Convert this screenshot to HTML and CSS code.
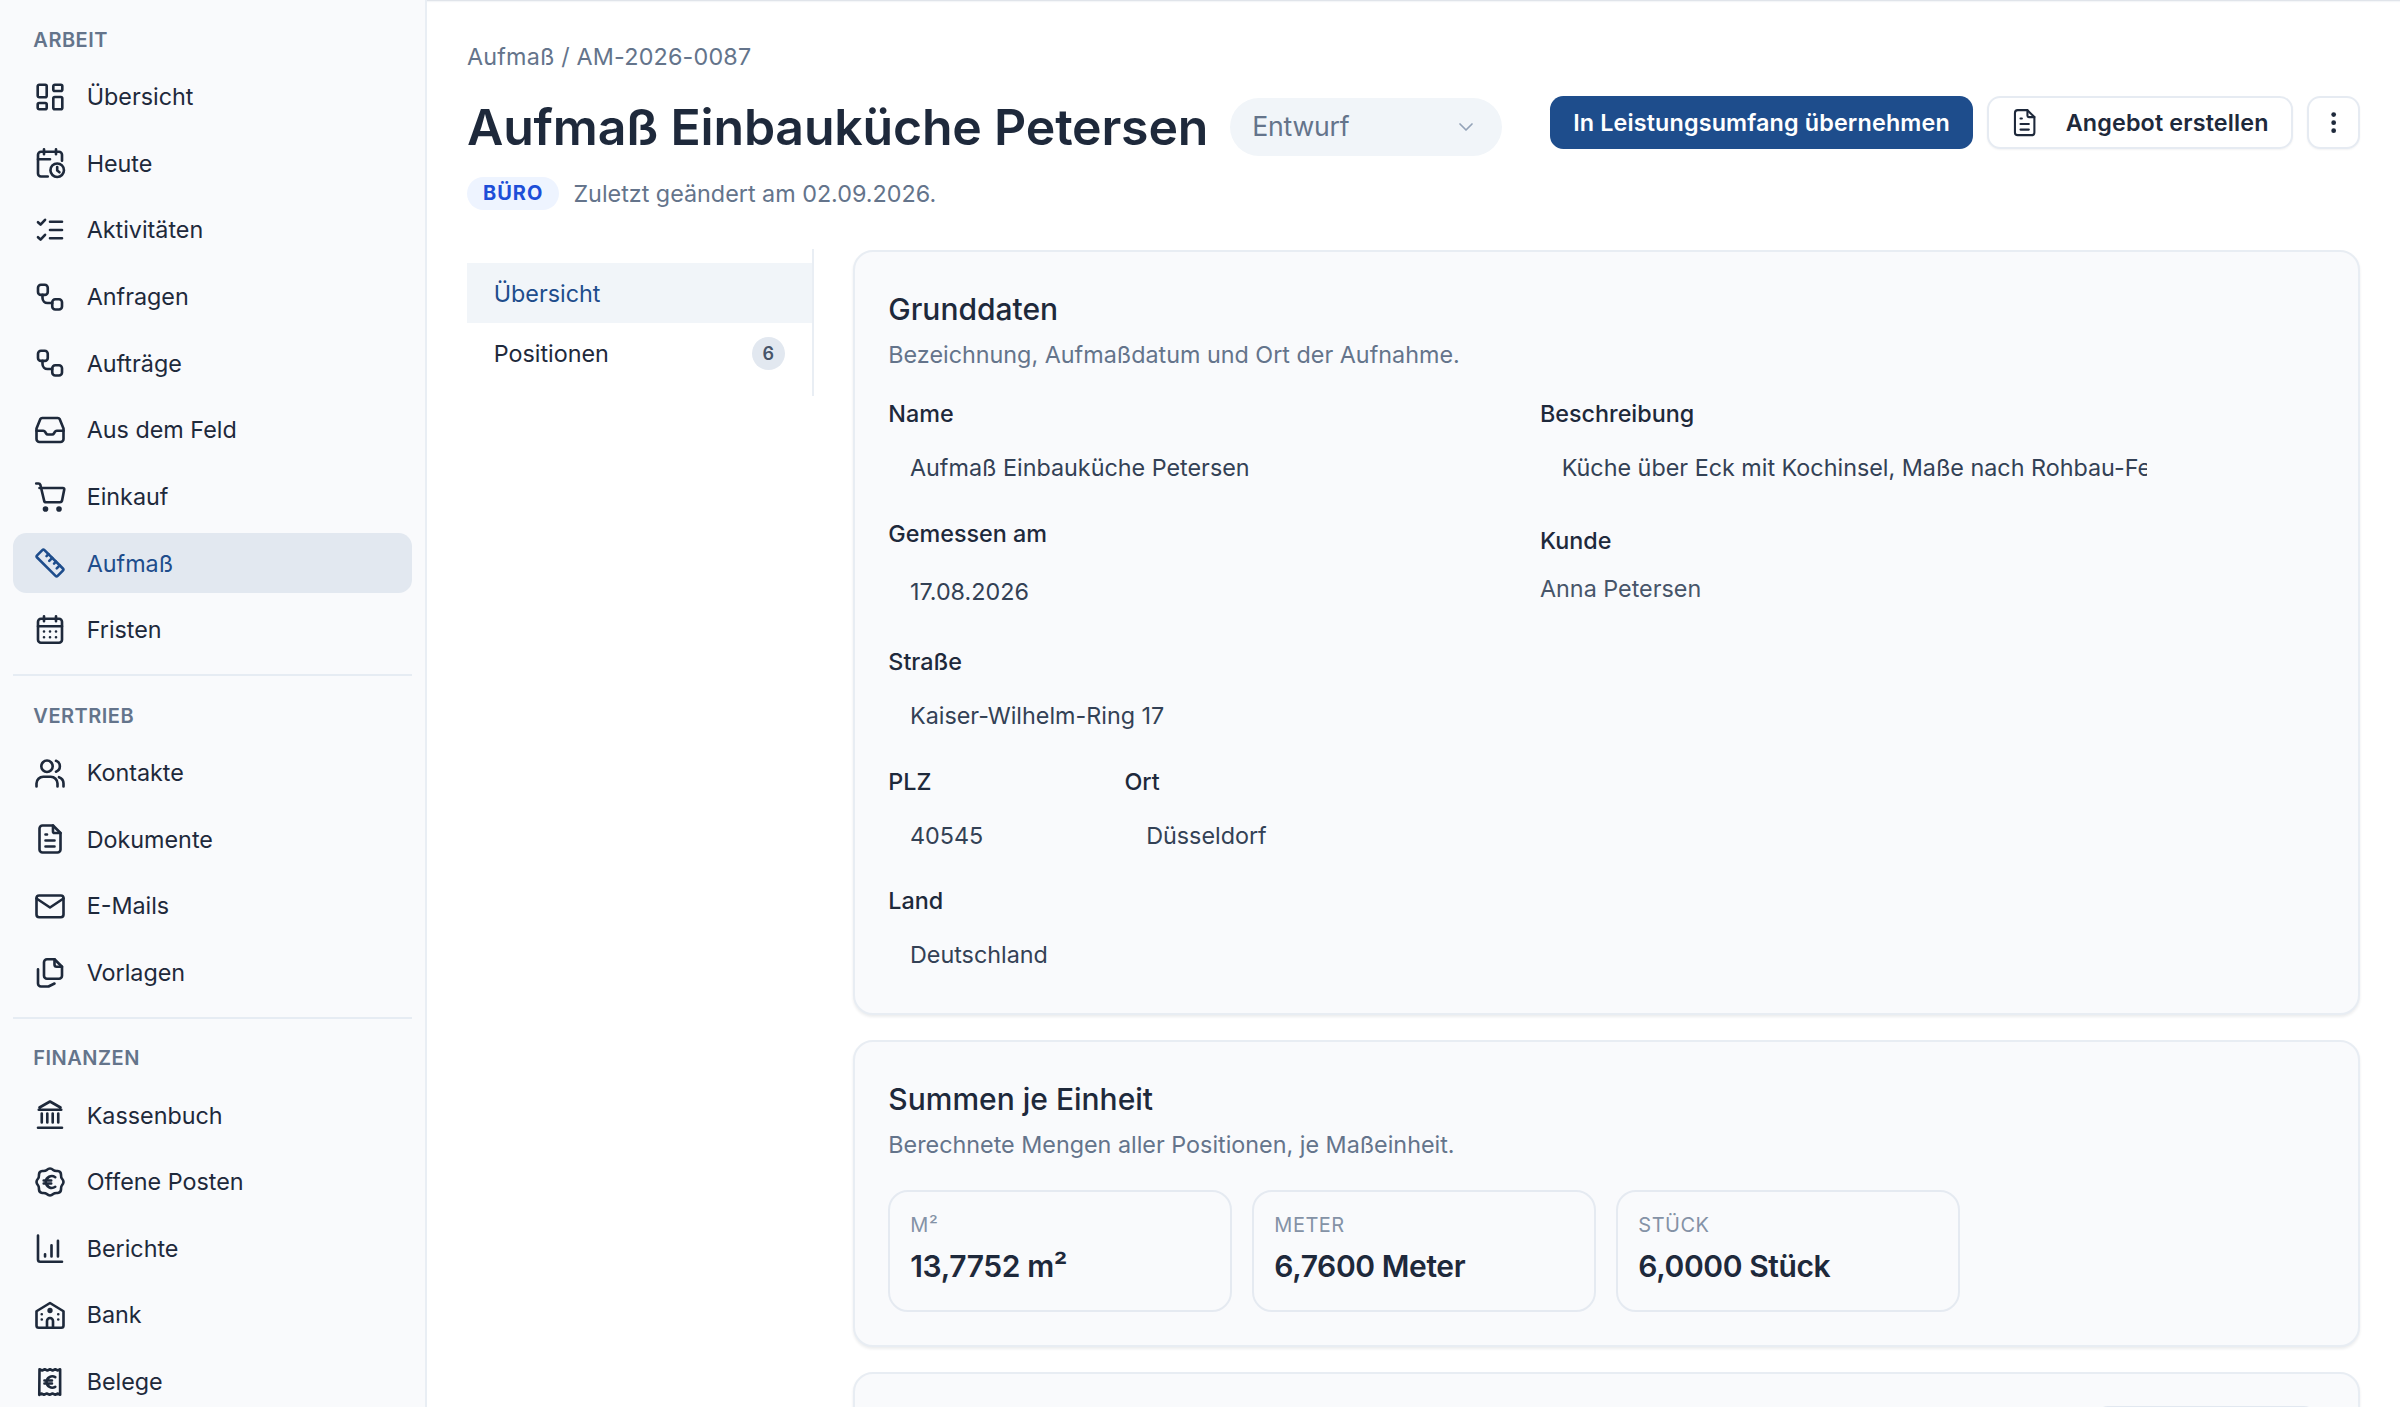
FILE: index.html
```html
<!DOCTYPE html>
<html lang="de">
<head>
<meta charset="utf-8">
<title>Aufmaß Einbauküche Petersen</title>
<link rel="stylesheet" href="styles.css">
</head>
<body>
<svg class="defs" width="0" height="0" aria-hidden="true">
  <symbol id="i-route" viewBox="0 0 24 24"><rect x="4" y="3.800" width="6.500" height="6.800" rx="2"/><rect x="13.500" y="13.500" width="6.500" height="6.800" rx="2"/><path d="M7 10.600v2.100a3.300 3.300 0 0 0 3.300 3.300h3.200"/></symbol>
</svg>
<aside class="sidebar">
  <div class="nav-label nav-label-first">Arbeit</div>
  <nav class="nav-group">
    <a class="nav-item"><svg class="icon" viewBox="0 0 24 24"><rect x="3.800" y="3.800" width="6" height="8.400" rx="1"/><rect x="14.200" y="3.800" width="6" height="4.200" rx="1"/><rect x="3.800" y="16" width="6" height="4.200" rx="1"/><rect x="14.200" y="12" width="6" height="8.200" rx="1"/></svg>Übersicht</a>
    <a class="nav-item"><svg class="icon" viewBox="0 0 24 24"><path d="M10.500 21H6a2 2 0 0 1-2-2V6.500a2 2 0 0 1 2-2h12a2 2 0 0 1 2 2v4"/><path d="M16 2.800v3.400M8 2.800v3.400M4 9.500h8"/><circle cx="16.800" cy="16.800" r="4.500"/><path d="M16.800 14.700v2.300l1.500 1.200"/></svg>Heute</a>
    <a class="nav-item"><svg class="icon" viewBox="0 0 24 24"><path d="m4 6.800 1.700 1.600 3-3.200M4 16.800l1.700 1.600 3-3.200"/><path d="M12 6.500h8M12 12h8M12 17.500h8"/></svg>Aktivitäten</a>
    <a class="nav-item"><svg class="icon"><use href="#i-route"/></svg>Anfragen</a>
    <a class="nav-item"><svg class="icon"><use href="#i-route"/></svg>Aufträge</a>
    <a class="nav-item"><svg class="icon" viewBox="0 0 24 24"><path d="M6.800 4h10.400a1.500 1.500 0 0 1 1.300.800L21 11v7a2 2 0 0 1-2 2H5a2 2 0 0 1-2-2v-7l2.500-6.200A1.500 1.500 0 0 1 6.800 4Z"/><path d="M3 12.500h4.500c.6 0 1 .3 1.300.8l.5.900c.3.500.7.800 1.300.8h2.800c.6 0 1-.3 1.300-.8l.5-.9c.3-.5.700-.8 1.300-.8H21"/></svg>Aus dem Feld</a>
    <a class="nav-item"><svg class="icon" viewBox="0 0 24 24"><path d="M2.800 3h1.500c.6 0 1.100.4 1.300 1l2.500 10.500c.1.600.7 1 1.300 1h9.300c.6 0 1.100-.4 1.300-1L21.500 7c.1-.5-.3-1-.9-1H5"/><circle cx="9" cy="20" r="1" class="solid"/><circle cx="18" cy="20" r="1" class="solid"/></svg>Einkauf</a>
    <a class="nav-item nav-item-active"><svg class="icon" viewBox="0 0 24 24"><path d="m8.300 3.400 12.300 12.300a1 1 0 0 1 0 1.400l-3.500 3.500a1 1 0 0 1-1.400 0L3.400 8.300a1 1 0 0 1 0-1.400l3.500-3.500a1 1 0 0 1 1.400 0Z"/><path d="m11 6.100-1.300 1.300M13.500 8.600l-2 2M16 11.100l-1.300 1.300M18.500 13.600l-2 2"/></svg>Aufmaß</a>
    <a class="nav-item"><svg class="icon" viewBox="0 0 24 24"><rect x="4" y="4.500" width="16" height="16" rx="2"/><path d="M8 2.800v3.400M16 2.800v3.400M4 9.500h16"/><path d="M8 13h.01M12 13h.01M16 13h.01M8 16.800h.01M12 16.800h.01M16 16.800h.01"/></svg>Fristen</a>
  </nav>
  <hr class="nav-divider">
  <div class="nav-label">Vertrieb</div>
  <nav class="nav-group">
    <a class="nav-item"><svg class="icon" viewBox="0 0 24 24"><circle cx="10" cy="7.500" r="3.800"/><path d="M3 21v-2a4.500 4.500 0 0 1 4.500-4.500h5A4.500 4.500 0 0 1 17 19v2"/><path d="M16 3.900a3.800 3.800 0 0 1 0 7.200M21 21v-2a4.500 4.500 0 0 0-3-4.200"/></svg>Kontakte</a>
    <a class="nav-item"><svg class="icon" viewBox="0 0 24 24"><path d="M7 3h7l5 5v11a2 2 0 0 1-2 2H7a2 2 0 0 1-2-2V5a2 2 0 0 1 2-2Z"/><path d="M14 3v4a1 1 0 0 0 1 1h4M9 9h1M9 13h6M9 17h6"/></svg>Dokumente</a>
    <a class="nav-item"><svg class="icon" viewBox="0 0 24 24"><rect x="3" y="5" width="18" height="14.500" rx="1.800"/><path d="m3 7 9 6 9-6"/></svg>E-Mails</a>
    <a class="nav-item"><svg class="icon" viewBox="0 0 24 24"><path d="M10 2.800h5l5 5v6a2 2 0 0 1-2 2h-8a2 2 0 0 1-2-2v-9a2 2 0 0 1 2-2Z"/><path d="M15 2.800v3.500A1.500 1.500 0 0 0 16.500 7.800H20"/><path d="M15 19 11 21H6a2 2 0 0 1-2-2V9.500"/></svg>Vorlagen</a>
  </nav>
  <hr class="nav-divider">
  <div class="nav-label">Finanzen</div>
  <nav class="nav-group">
    <a class="nav-item"><svg class="icon" viewBox="0 0 24 24"><path d="M4 20.500h16M4.500 8.500h15M5 7l7-4 7 4"/><path d="M6.500 11v6M10.200 11v6M13.800 11v6M17.500 11v6"/></svg>Kassenbuch</a>
    <a class="nav-item"><svg class="icon" viewBox="0 0 24 24"><path d="M12 3c1 0 1.700.6 2.400 1.200.6.500 1.800.4 2.800.5 1 .1 2 1 2.100 2 .1 1 0 2.200.5 2.800.6.700 1.200 1.500 1.200 2.500s-.6 1.800-1.200 2.500c-.5.600-.4 1.800-.5 2.800-.1 1-1.100 1.900-2.100 2-1 .1-2.200 0-2.800.5-.7.600-1.400 1.200-2.400 1.200s-1.700-.6-2.400-1.200c-.6-.5-1.800-.4-2.800-.5-1-.1-2-1-2.100-2-.1-1 0-2.200-.5-2.800C3.600 13.800 3 13 3 12s.6-1.800 1.200-2.500c.5-.6.4-1.800.5-2.800.1-1 1.100-1.900 2.100-2 1-.1 2.200 0 2.800-.5C10.300 3.600 11 3 12 3Z"/><path d="M15.500 8.800A4 4 0 0 0 9.200 12a4 4 0 0 0 6.300 3.200M7.800 11h5M7.800 13h5"/></svg>Offene Posten</a>
    <a class="nav-item"><svg class="icon" viewBox="0 0 24 24"><path d="M4 3v16a1.500 1.500 0 0 0 1.500 1.500H20"/><path d="M8.700 15.500v1.500M13 9.500V17M17.300 6.500V17"/></svg>Berichte</a>
    <a class="nav-item"><svg class="icon" viewBox="0 0 24 24"><path d="M3 9.500 12 4l9 5.500V19a1.500 1.500 0 0 1-1.500 1.500h-15A1.500 1.500 0 0 1 3 19Z"/><circle cx="12" cy="9" r=".9" class="solid"/><path d="M10 20.500V16a2 2 0 0 1 4 0v4.500"/><path d="M6.500 11.500h.01M6.500 15h.01M17.500 11.500h.01M17.500 15h.01"/></svg>Bank</a>
    <a class="nav-item"><svg class="icon" viewBox="0 0 24 24"><path d="M5 3.500l1.750.8 1.750-.8 1.750.8 1.750-.8 1.750.8 1.750-.8 1.750.8 1.500-.8v17l-1.500-.8-1.700.8-1.900-.8-1.900.8-1.900-.8-1.900.8-1.700-.8-1.400.8Z"/><path d="M15.500 8.800A3.800 3.800 0 0 0 9.700 12a3.800 3.800 0 0 0 5.800 3.200M8.300 11h5M8.300 13h5"/></svg>Belege</a>
  </nav>
</aside>
<main class="main">
  <div class="breadcrumb">Aufmaß / AM-2026-0087</div>
  <header class="page-head">
    <h1 class="page-title">Aufmaß Einbauküche Petersen</h1>
    <div class="status-select"><span>Entwurf</span><svg class="chevron" viewBox="0 0 24 24"><path d="m6 9 6 6 6-6"/></svg></div>
    <div class="actions">
      <a class="btn btn-primary">In Leistungsumfang übernehmen</a>
      <a class="btn btn-outline"><svg class="btn-icon" viewBox="0 0 24 24"><path d="M7 3h7l5 5v11a2 2 0 0 1-2 2H7a2 2 0 0 1-2-2V5a2 2 0 0 1 2-2Z"/><path d="M14 3v4a1 1 0 0 0 1 1h4M9 9h1M9 13h6M9 17h6"/></svg>Angebot erstellen</a>
      <a class="btn btn-icon-only"><svg class="btn-dots" viewBox="0 0 24 24"><circle cx="12" cy="6.200" r="1.700"/><circle cx="12" cy="12" r="1.700"/><circle cx="12" cy="17.800" r="1.700"/></svg></a>
    </div>
  </header>
  <div class="meta-row"><span class="badge">BÜRO</span><span>Zuletzt geändert am 02.09.2026.</span></div>
  <div class="content">
    <nav class="tabs">
      <a class="tab tab-active">Übersicht</a>
      <a class="tab">Positionen<span class="tab-count">6</span></a>
    </nav>
    <div class="cards">
      <section class="card card-form">
        <h2 class="card-title">Grunddaten</h2>
        <p class="card-sub">Bezeichnung, Aufmaßdatum und Ort der Aufnahme.</p>
        <div class="form-grid">
          <div class="form-col">
            <div class="field"><div class="field-label">Name</div><div class="field-value">Aufmaß Einbauküche Petersen</div></div>
            <div class="field"><div class="field-label">Gemessen am</div><div class="field-value field-value-date">17.08.2026</div></div>
            <div class="field"><div class="field-label">Straße</div><div class="field-value">Kaiser-Wilhelm-Ring 17</div></div>
            <div class="field-pair">
              <div class="field"><div class="field-label">PLZ</div><div class="field-value">40545</div></div>
              <div class="field"><div class="field-label">Ort</div><div class="field-value">Düsseldorf</div></div>
            </div>
            <div class="field field-land"><div class="field-label">Land</div><div class="field-value">Deutschland</div></div>
          </div>
          <div class="form-col form-col-right">
            <div class="field"><div class="field-label">Beschreibung</div><div class="field-value">Küche über Eck mit Kochinsel, Maße nach Rohbau-Fertigstellung</div></div>
            <div class="field"><div class="field-label">Kunde</div><div class="field-plain">Anna Petersen</div></div>
          </div>
        </div>
      </section>
      <section class="card">
        <h2 class="card-title">Summen je Einheit</h2>
        <p class="card-sub">Berechnete Mengen aller Positionen, je Maßeinheit.</p>
        <div class="tiles">
          <div class="tile"><div class="tile-label">m²</div><div class="tile-value">13,7752 m²</div></div>
          <div class="tile"><div class="tile-label">Meter</div><div class="tile-value">6,7600 Meter</div></div>
          <div class="tile"><div class="tile-label">Stück</div><div class="tile-value">6,0000 Stück</div></div>
        </div>
      </section>
      <section class="card card-cut"><div class="cut-button"></div></section>
    </div>
  </div>
</main>
</body>
</html>
```
FILE: styles.css
```css
* { box-sizing: border-box; }
html, body { margin: 0; height: 1407px; overflow: hidden; }
body { display: flex; background: #fff; color: #1e293b; font-family: Inter, "Liberation Sans", sans-serif; font-size: 23.33px; line-height: 33.33px; }
.defs { position: absolute; }
svg { fill: none; stroke: currentColor; stroke-width: 1.75; stroke-linecap: round; stroke-linejoin: round; flex: none; }
svg .solid { fill: currentColor; }

.sidebar { width: 427px; flex: none; height: 1407px; overflow: hidden; background: #f9fafc; border-right: 2px solid #e9eef4; padding: 0 13.33px; }
.nav-label { padding-left: 20px; font-size: 20px; line-height: 26.67px; font-weight: 600; letter-spacing: .5px; text-transform: uppercase; color: #64748b; margin: 0 0 13.33px; }
.nav-label-first { padding-top: 26.67px; }
.nav-group { display: flex; flex-direction: column; gap: 6.67px; }
.nav-item { display: flex; align-items: center; gap: 18.67px; height: 60px; padding: 0 18.67px; border-radius: 13.33px; color: #1e293b; }
.nav-item .icon { width: 36px; height: 36px; color: #1e293b; }
.nav-item-active { background: #e2e8f0; color: #1e4d8c; }
.nav-item-active .icon { color: #1e4d8c; }
.nav-divider { border: 0; height: 2px; background: #e6ecf3; margin: 14px 0 26.67px; }

.main { flex: 1; min-width: 0; height: 1407px; overflow: hidden; padding: 39.67px 40px 0; box-shadow: inset 0 3px 2px -2px #d5dbe3; }
.breadcrumb { color: #64748b; height: 33.33px; margin-bottom: 24px; letter-spacing: .18px; }
.page-head { display: flex; align-items: flex-start; }
.page-title { margin: 0; font-size: 50px; line-height: 60px; font-weight: 600; letter-spacing: -.2px; color: #1e293b; white-space: nowrap; }
.status-select { display: flex; align-items: center; justify-content: space-between; width: 272px; height: 58px; margin: 1px 0 0 22px; padding: 0 24px 0 22px; border-radius: 29px; background: #f1f5f9; color: #64748b; font-size: 26.67px; letter-spacing: -.2px; }
.chevron { width: 24px; height: 24px; color: #94a3b8; stroke-width: 1.7; }
.actions { display: flex; gap: 14px; margin-left: auto; margin-top: -1px; align-items: flex-start; }
.btn { display: flex; align-items: center; justify-content: center; height: 53.33px; border-radius: 13.33px; font-weight: 600; letter-spacing: .15px; white-space: nowrap; }
.btn-primary { width: 423px; background: #1e4d8c; color: #fff; }
.btn-outline { width: 306px; gap: 24px; padding-right: 3px; background: #fff; border: 2px solid #e6ebf2; color: #1e293b; box-shadow: 0 1px 2px rgba(15,23,42,.05); }
.btn-icon { width: 33.33px; height: 33.33px; stroke-width: 1.5; }
.btn-icon-only { width: 53px; background: #fff; border: 2px solid #e6ebf2; box-shadow: 0 1px 2px rgba(15,23,42,.05); }
.btn-dots { width: 33.33px; height: 33.33px; fill: #1e293b; stroke: none; }

.meta-row { display: flex; align-items: center; gap: 14px; margin-top: 20px; color: #64748b; height: 33.33px; }
.badge { display: flex; align-items: center; height: 33.33px; padding: 0 16px; border-radius: 16.67px; background: #eef4ff; color: #1d4ed8; font-size: 20px; font-weight: 700; letter-spacing: 1px; }

.content { display: flex; align-items: flex-start; gap: 39.5px; margin-top: 39px; }
.tabs { width: 346.5px; flex: none; height: 147px; padding-top: 14px; border-right: 2px solid #e9eef4; }
.tab { display: flex; align-items: center; justify-content: space-between; height: 60px; padding: 0 26.67px; color: #1e293b; }
.tab-active { background: #f1f5f9; color: #1e4d8c; }
.tab-count { display: flex; align-items: center; justify-content: center; width: 33px; height: 33px; border-radius: 50%; background: #e2e8f0; color: #475569; font-size: 18px; font-weight: 600; }

.cards { flex: 1; min-width: 0; display: flex; flex-direction: column; gap: 25px; margin-top: 1px; }
.card { background: #f9fafc; border: 2px solid #e8edf3; border-radius: 20px; padding: 33.33px; box-shadow: 0 2px 3px rgba(15,23,42,.08); }
.card-form { padding-bottom: 28.5px; }
.card-title { margin: 0; font-size: 30px; line-height: 46.67px; font-weight: 500; color: #1e293b; }
.card-sub { margin: 6px 0 25px; color: #64748b; }
.form-grid { display: grid; grid-template-columns: 625px 629px; gap: 26.67px; }
.form-col { display: flex; flex-direction: column; gap: 18.67px; }
.form-col-right { gap: 25.67px; }
.field { min-width: 0; }
.field-land { margin-top: -1px; }
.field-label { font-weight: 500; height: 33.33px; margin-bottom: 8px; color: #1e293b; }
.field-value { height: 60px; line-height: 60px; margin: 0 21.67px; overflow: hidden; white-space: nowrap; color: #334155; }
.field-value-date { height: 68px; line-height: 68px; }
.field-plain { color: #475569; margin-top: 14.67px; }
.field-pair { display: grid; grid-template-columns: 209.5px 1fr; gap: 26.67px; }
.tiles { display: grid; grid-template-columns: repeat(3, 344px); gap: 20px; margin-top: 28px; }
.tile { border: 2px solid #e5eaf1; border-radius: 20px; height: 122px; padding: 20px; }
.tile-label { font-size: 20px; line-height: 26.67px; color: #8492a6; text-transform: uppercase; letter-spacing: .5px; }
.tile-value { margin-top: 8px; font-size: 30px; line-height: 40px; font-weight: 600; letter-spacing: -.4px; color: #1e293b; }
.card-cut { height: 200px; padding: 0; position: relative; }
.cut-button { position: absolute; top: 32px; right: 41px; width: 222px; height: 60px; background: #f9fafc; border: 2px solid #e2e8f0; border-radius: 13px; }
```
